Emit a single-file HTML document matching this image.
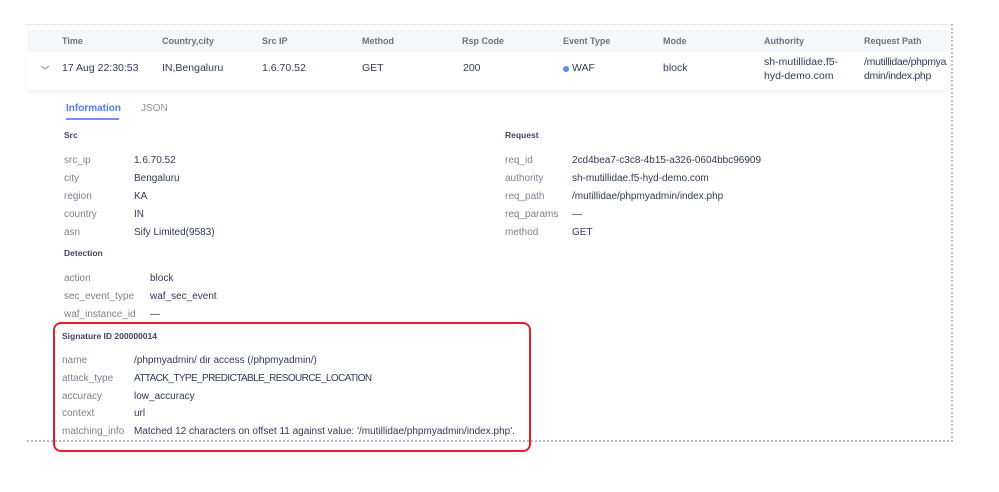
<!DOCTYPE html>
<html><head><style>
body{margin:0;width:999px;height:492px;background:#fff;font-family:"Liberation Sans",sans-serif;position:relative;overflow:hidden;color:#2b3450}
.a{position:absolute;white-space:nowrap}
.h{font-size:9px;color:#6b7280;font-weight:bold}
.c{font-size:10.5px;color:#2f3a5c}
.l{font-size:10px;color:#7b8191}
.v{font-size:10px;color:#2f3a5c}
.s{font-size:8.5px;font-weight:bold;color:#3d4560}
</style></head><body>
<div class="a" style="left:27px;top:24px;width:925px;border-top:1px dotted #d6d9de"></div>
<div class="a" style="left:27px;top:30px;width:922px;height:22px;background:#f6f7f9"></div>
<div class="a" style="left:27px;top:52px;width:922px;height:38px;background:#fff;box-shadow:0 3px 4px rgba(0,0,0,0.05)"></div>
<div class="a" style="left:951px;top:24px;height:418px;border-left:2px dotted #b8bcc3"></div>
<div class="a" style="left:27px;top:440px;width:926px;border-top:2px dotted #b8bcc3"></div>
<div class="a h" style="left:62px;top:36px">Time</div>
<div class="a h" style="left:162px;top:36px">Country,city</div>
<div class="a h" style="left:262px;top:36px">Src IP</div>
<div class="a h" style="left:362px;top:36px">Method</div>
<div class="a h" style="left:462px;top:36px">Rsp Code</div>
<div class="a h" style="left:563px;top:36px">Event Type</div>
<div class="a h" style="left:663px;top:36px">Mode</div>
<div class="a h" style="left:764px;top:36px">Authority</div>
<div class="a h" style="left:864px;top:36px">Request Path</div>
<svg class="a" style="left:40px;top:65px" width="10" height="6"><path d="M1 1L5 4L9 1" stroke="#8a909c" fill="none" stroke-width="1"/></svg>
<div class="a c" style="left:62px;top:62px">17 Aug 22:30:53</div>
<div class="a c" style="left:162px;top:62px">IN,Bengaluru</div>
<div class="a c" style="left:262px;top:62px">1.6.70.52</div>
<div class="a c" style="left:362px;top:62px">GET</div>
<div class="a c" style="left:463px;top:62px">200</div>
<div class="a" style="left:563px;top:66px;width:6px;height:6px;border-radius:50%;background:#5b8def"></div>
<div class="a c" style="left:572px;top:62px">WAF</div>
<div class="a c" style="left:663px;top:62px">block</div>
<div class="a c" style="left:764px;top:55px;line-height:14px">sh-mutillidae.f5-<br>hyd-demo.com</div>
<div class="a c" style="left:864px;top:55px;line-height:14px;letter-spacing:-0.3px">/mutillidae/phpmya<br>dmin/index.php</div>
<div class="a" style="left:66px;top:103px;font-size:10px;color:#4f7cf0;font-weight:bold">Information</div>
<div class="a" style="left:66px;top:118px;width:53px;height:2px;background:#6b93f3"></div>
<div class="a" style="left:141px;top:103px;font-size:10px;color:#8a909c">JSON</div>
<div class="a s" style="left:64px;top:130px">Src</div>
<div class="a l" style="left:64px;top:155px">src_ip</div><div class="a v" style="left:134px;top:155px">1.6.70.52</div>
<div class="a l" style="left:64px;top:173px">city</div><div class="a v" style="left:134px;top:173px">Bengaluru</div>
<div class="a l" style="left:64px;top:191px">region</div><div class="a v" style="left:134px;top:191px">KA</div>
<div class="a l" style="left:64px;top:209px">country</div><div class="a v" style="left:134px;top:209px">IN</div>
<div class="a l" style="left:64px;top:227px">asn</div><div class="a v" style="left:134px;top:227px">Sify Limited(9583)</div>
<div class="a s" style="left:505px;top:130px">Request</div>
<div class="a l" style="left:505px;top:155px">req_id</div><div class="a v" style="left:572px;top:155px">2cd4bea7-c3c8-4b15-a326-0604bbc96909</div>
<div class="a l" style="left:505px;top:173px">authority</div><div class="a v" style="left:572px;top:173px">sh-mutillidae.f5-hyd-demo.com</div>
<div class="a l" style="left:505px;top:191px">req_path</div><div class="a v" style="left:572px;top:191px">/mutillidae/phpmyadmin/index.php</div>
<div class="a l" style="left:505px;top:209px">req_params</div><div class="a v" style="left:572px;top:209px">—</div>
<div class="a l" style="left:505px;top:227px">method</div><div class="a v" style="left:572px;top:227px">GET</div>
<div class="a s" style="left:64px;top:248px">Detection</div>
<div class="a l" style="left:64px;top:273px">action</div><div class="a v" style="left:150px;top:273px">block</div>
<div class="a l" style="left:64px;top:291px">sec_event_type</div><div class="a v" style="left:150px;top:291px">waf_sec_event</div>
<div class="a l" style="left:64px;top:309px">waf_instance_id</div><div class="a v" style="left:150px;top:309px">—</div>
<div class="a" style="left:53px;top:322px;width:474px;height:126px;border:2px solid #e0202a;border-radius:8px"></div>
<div class="a s" style="left:62px;top:331px">Signature ID 200000014</div>
<div class="a l" style="left:62px;top:355px">name</div><div class="a v" style="left:134px;top:355px">/phpmyadmin/ dir access (/phpmyadmin/)</div>
<div class="a l" style="left:62px;top:373px">attack_type</div><div class="a v" style="left:134px;top:373px;letter-spacing:-0.6px">ATTACK_TYPE_PREDICTABLE_RESOURCE_LOCATION</div>
<div class="a l" style="left:62px;top:391px">accuracy</div><div class="a v" style="left:134px;top:391px">low_accuracy</div>
<div class="a l" style="left:62px;top:408px">context</div><div class="a v" style="left:134px;top:408px">url</div>
<div class="a l" style="left:62px;top:426px">matching_info</div><div class="a v" style="left:134px;top:426px">Matched 12 characters on offset 11 against value: '/mutillidae/phpmyadmin/index.php'.</div>
</body></html>
